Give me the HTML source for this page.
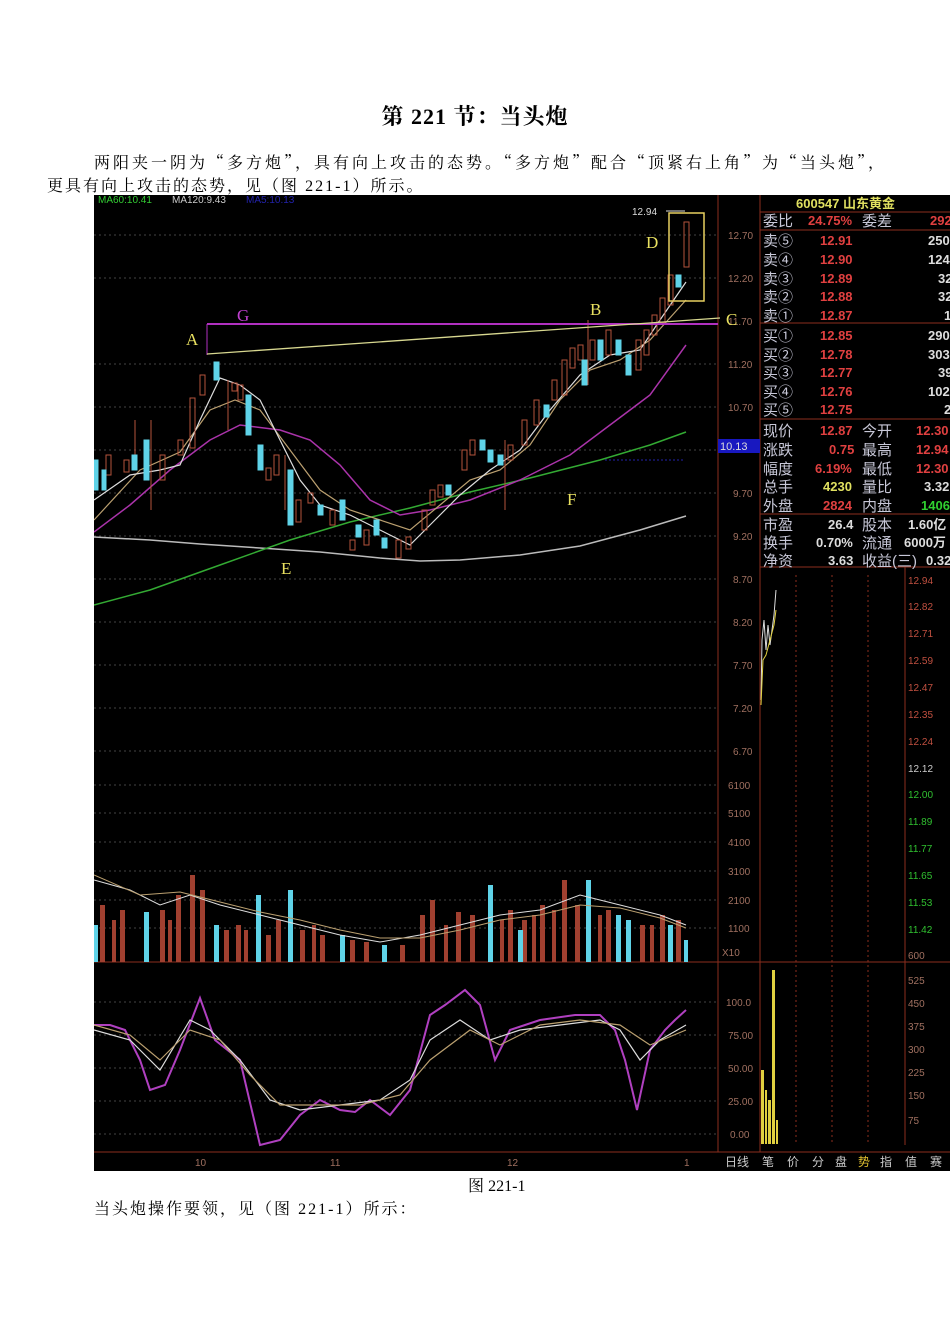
<!DOCTYPE html>
<html><head><meta charset="utf-8"><style>
body{margin:0;background:#fff;width:950px;height:1344px;position:relative;font-family:"Noto Serif CJK SC","Liberation Serif",serif;overflow:hidden}
.t{position:absolute;font-size:16px;color:#000;white-space:nowrap;line-height:20px}
.n{font-family:"Liberation Serif",serif}
svg text{font-family:"Liberation Sans","Noto Sans CJK SC",sans-serif}
svg .s{font-family:"Liberation Serif",serif}
</style></head><body>
<div class="t" style="left:0;width:950px;text-align:center;top:104px;font-size:22px;font-weight:bold;letter-spacing:1px;line-height:24px">第 <span class="n">221</span> 节：当头炮</div>
<div class="t" style="left:94px;top:152px;letter-spacing:3px">两阳夹一阴为“多方炮”，具有向上攻击的态势。“多方炮”配合“顶紧右上角”为“当头炮”，</div>
<div class="t" style="left:47px;top:175px;letter-spacing:2px">更具有向上攻击的态势，见（图 <span class="n">221-1</span>）所示。</div>
<div class="t" style="left:468px;top:1175px"><span>图</span> <span class="n">221-1</span></div>
<div class="t" style="left:94px;top:1198px;letter-spacing:2px">当头炮操作要领，见（图 <span class="n">221-1</span>）所示：</div>
<svg style="position:absolute;left:94px;top:195px" width="856" height="976" viewBox="94 195 856 976">
<rect x="94" y="195" width="856" height="976" fill="#000"/>
<text x="98" y="203" font-size="10" fill="#3c3">MA60:10.41</text><text x="172" y="203" font-size="10" fill="#ccc">MA120:9.43</text><text x="246" y="203" font-size="10" fill="#22a">MA5:10.13</text>
<g stroke="#444" stroke-dasharray="2,3" stroke-width="1">
<line x1="94" y1="235" x2="718" y2="235"/><line x1="94" y1="278" x2="718" y2="278"/><line x1="94" y1="364" x2="718" y2="364"/><line x1="94" y1="407" x2="718" y2="407"/><line x1="94" y1="450" x2="718" y2="450"/><line x1="94" y1="493" x2="718" y2="493"/><line x1="94" y1="536" x2="718" y2="536"/><line x1="94" y1="579" x2="718" y2="579"/><line x1="94" y1="622" x2="718" y2="622"/><line x1="94" y1="665" x2="718" y2="665"/><line x1="94" y1="708" x2="718" y2="708"/><line x1="94" y1="751" x2="718" y2="751"/><line x1="94" y1="785" x2="718" y2="785"/><line x1="94" y1="813" x2="718" y2="813"/><line x1="94" y1="842" x2="718" y2="842"/><line x1="94" y1="871" x2="718" y2="871"/><line x1="94" y1="900" x2="718" y2="900"/><line x1="94" y1="928" x2="718" y2="928"/><line x1="94" y1="1002" x2="718" y2="1002"/><line x1="94" y1="1035" x2="718" y2="1035"/><line x1="94" y1="1068" x2="718" y2="1068"/><line x1="94" y1="1101" x2="718" y2="1101"/><line x1="94" y1="1134" x2="718" y2="1134"/>
</g>
<g stroke="#8b2e1e" fill="none"><line x1="718" y1="195" x2="718" y2="1152"/><line x1="760" y1="195" x2="760" y2="1152"/><line x1="94" y1="962" x2="950" y2="962"/><line x1="94" y1="1152" x2="950" y2="1152"/><line x1="760" y1="212" x2="950" y2="212"/><line x1="760" y1="230" x2="950" y2="230"/><line x1="760" y1="323" x2="950" y2="323"/><line x1="760" y1="419" x2="950" y2="419"/><line x1="760" y1="514" x2="950" y2="514"/><line x1="760" y1="567" x2="950" y2="567"/><line x1="905" y1="567" x2="905" y2="1145"/><line x1="760" y1="962" x2="905" y2="962"/></g>
<g font-size="10" fill="#a07060">
<text x="728" y="239">12.70</text><text x="728" y="282">12.20</text><text x="728" y="325">11.70</text><text x="728" y="368">11.20</text><text x="728" y="411">10.70</text><text x="733" y="497">9.70</text><text x="733" y="540">9.20</text><text x="733" y="583">8.70</text><text x="733" y="626">8.20</text><text x="733" y="669">7.70</text><text x="733" y="712">7.20</text><text x="733" y="755">6.70</text>
<text x="728" y="789">6100</text><text x="728" y="817">5100</text><text x="728" y="846">4100</text><text x="728" y="875">3100</text><text x="728" y="904">2100</text><text x="728" y="932">1100</text><text x="722" y="956">X10</text>
<text x="726" y="1006">100.0</text><text x="728" y="1039">75.00</text><text x="728" y="1072">50.00</text><text x="728" y="1105">25.00</text><text x="730" y="1138">0.00</text>
</g>
<rect x="718" y="439" width="42" height="14" fill="#1818c0"/><text x="720" y="450" font-size="11" fill="#ddd">10.13</text>
<line x1="605" y1="460" x2="685" y2="460" stroke="#22a" stroke-dasharray="2,2"/>
<polyline fill="none" stroke="#bbb" stroke-width="1.5" points="94,537 150,540 200,544 260,548 320,552 380,558 420,561 460,560 520,555 580,546 640,530 686,516"/>
<polyline fill="none" stroke="#3a3" stroke-width="1.5" points="94,605 150,590 220,565 290,540 350,522 410,508 470,492 530,478 600,460 650,445 686,432"/>
<polyline fill="none" stroke="#a3a" stroke-width="1.5" points="94,532 130,505 170,470 210,440 240,425 280,430 310,440 340,465 370,500 400,515 430,510 470,500 520,480 570,455 610,425 650,395 686,345"/>
<polyline fill="none" stroke="#bba070" stroke-width="1.2" points="94,520 140,470 180,452 210,410 235,400 260,410 290,450 320,490 350,510 380,520 410,530 440,505 470,480 500,470 530,445 560,400 590,370 620,360 650,340 686,300"/>
<polyline fill="none" stroke="#ddd" stroke-width="1.2" points="94,500 130,475 160,470 180,465 200,420 220,378 240,385 260,400 280,440 300,480 320,505 350,515 380,530 410,545 430,525 460,495 490,470 520,450 550,410 580,375 610,355 640,350 660,320 686,282"/>
<g stroke-width="1">
<g stroke="#b5533c" fill="none">
<rect x="106" y="455" width="5" height="20"/><rect x="124" y="460" width="5" height="12"/><rect x="160" y="455" width="5" height="25"/><rect x="178" y="440" width="5" height="15"/><rect x="190" y="398" width="5" height="50"/><rect x="200" y="375" width="5" height="20"/><rect x="232" y="383" width="5" height="8"/><rect x="238" y="385" width="5" height="15"/><rect x="266" y="468" width="5" height="12"/><rect x="274" y="455" width="5" height="20"/><rect x="296" y="500" width="5" height="22"/><rect x="308" y="493" width="5" height="10"/><rect x="330" y="510" width="5" height="15"/><rect x="350" y="540" width="5" height="10"/><rect x="364" y="530" width="5" height="15"/><rect x="396" y="540" width="5" height="18"/><rect x="406" y="537" width="5" height="12"/><rect x="422" y="510" width="5" height="20"/><rect x="430" y="490" width="5" height="15"/><rect x="438" y="485" width="5" height="12"/><rect x="462" y="450" width="5" height="20"/><rect x="470" y="440" width="5" height="15"/><rect x="508" y="445" width="5" height="15"/><rect x="522" y="420" width="5" height="25"/><rect x="534" y="400" width="5" height="25"/><rect x="552" y="380" width="5" height="20"/><rect x="562" y="360" width="5" height="35"/><rect x="570" y="348" width="5" height="20"/><rect x="578" y="345" width="5" height="15"/><rect x="590" y="340" width="5" height="20"/><rect x="606" y="330" width="5" height="25"/><rect x="636" y="340" width="5" height="30"/><rect x="644" y="330" width="5" height="25"/><rect x="652" y="315" width="5" height="20"/><rect x="660" y="298" width="5" height="25"/><rect x="668" y="275" width="5" height="30"/><rect x="684" y="222" width="5" height="45"/>
<line x1="151" y1="420" x2="151" y2="510"/><line x1="135" y1="420" x2="135" y2="470"/><line x1="228" y1="380" x2="228" y2="430"/><line x1="285" y1="455" x2="285" y2="510"/><line x1="505" y1="440" x2="505" y2="510"/><line x1="588" y1="320" x2="588" y2="385"/>
</g>
<g fill="#5fd3e8" stroke="#5fd3e8">
<rect x="94" y="460" width="4" height="30"/><rect x="102" y="470" width="4" height="20"/><rect x="132" y="455" width="5" height="15"/><rect x="144" y="440" width="5" height="40"/><rect x="214" y="362" width="5" height="18"/><rect x="246" y="395" width="5" height="40"/><rect x="258" y="445" width="5" height="25"/><rect x="288" y="470" width="5" height="55"/><rect x="318" y="505" width="5" height="10"/><rect x="340" y="500" width="5" height="20"/><rect x="356" y="525" width="5" height="12"/><rect x="374" y="520" width="5" height="15"/><rect x="382" y="538" width="5" height="10"/><rect x="446" y="485" width="5" height="10"/><rect x="480" y="440" width="5" height="10"/><rect x="488" y="450" width="5" height="12"/><rect x="498" y="455" width="5" height="10"/><rect x="544" y="405" width="5" height="12"/><rect x="582" y="360" width="5" height="25"/><rect x="598" y="340" width="5" height="20"/><rect x="616" y="340" width="5" height="15"/><rect x="626" y="355" width="5" height="20"/><rect x="676" y="275" width="5" height="12"/>
</g></g>
<line x1="207" y1="324" x2="718" y2="324" stroke="#b030c0" stroke-width="2"/>
<line x1="207" y1="324" x2="207" y2="355" stroke="#b030c0"/>
<line x1="207" y1="354" x2="720" y2="318" stroke="#d8d890" stroke-width="1.3"/>
<rect x="669" y="213" width="35" height="88" fill="none" stroke="#e8d060" stroke-width="1.5"/>
<g fill="#e8e060" font-size="17">
<text class="s" x="186" y="345">A</text><text class="s" x="590" y="315">B</text><text class="s" x="726" y="325">C</text><text class="s" x="646" y="248">D</text><text class="s" x="281" y="574">E</text><text class="s" x="567" y="505">F</text><text class="s" x="237" y="321" fill="#c040d0">G</text></g>
<text x="632" y="215" font-size="10" fill="#ddd">12.94</text><line x1="666" y1="211" x2="685" y2="211" stroke="#ddd"/>
<g fill="#a04030">
<rect x="100" y="905" width="5" height="57"/><rect x="120" y="910" width="5" height="52"/><rect x="160" y="910" width="5" height="52"/><rect x="176" y="895" width="5" height="67"/><rect x="190" y="875" width="5" height="87"/><rect x="200" y="890" width="5" height="72"/><rect x="224" y="930" width="5" height="32"/><rect x="236" y="925" width="5" height="37"/><rect x="266" y="935" width="5" height="27"/><rect x="276" y="920" width="5" height="42"/><rect x="300" y="930" width="5" height="32"/><rect x="320" y="935" width="5" height="27"/><rect x="350" y="940" width="5" height="22"/><rect x="364" y="942" width="5" height="20"/><rect x="400" y="945" width="5" height="17"/><rect x="420" y="915" width="5" height="47"/><rect x="430" y="900" width="5" height="62"/><rect x="456" y="912" width="5" height="50"/><rect x="470" y="915" width="5" height="47"/><rect x="508" y="910" width="5" height="52"/><rect x="522" y="920" width="5" height="42"/><rect x="540" y="905" width="5" height="57"/><rect x="562" y="880" width="5" height="82"/><rect x="575" y="905" width="5" height="57"/><rect x="606" y="910" width="5" height="52"/><rect x="640" y="925" width="5" height="37"/><rect x="660" y="915" width="5" height="47"/><rect x="676" y="920" width="5" height="42"/>
<rect x="112" y="920" width="4" height="42"/><rect x="168" y="920" width="4" height="42"/><rect x="244" y="930" width="4" height="32"/><rect x="312" y="925" width="4" height="37"/><rect x="444" y="925" width="4" height="37"/><rect x="500" y="920" width="4" height="42"/><rect x="532" y="915" width="4" height="47"/><rect x="552" y="910" width="4" height="52"/><rect x="598" y="915" width="4" height="47"/><rect x="650" y="925" width="4" height="37"/>
</g>
<g fill="#5fd3e8">
<rect x="94" y="925" width="4" height="37"/><rect x="144" y="912" width="5" height="50"/><rect x="214" y="925" width="5" height="37"/><rect x="256" y="895" width="5" height="67"/><rect x="288" y="890" width="5" height="72"/><rect x="340" y="935" width="5" height="27"/><rect x="382" y="945" width="5" height="17"/><rect x="488" y="885" width="5" height="77"/><rect x="518" y="930" width="5" height="32"/><rect x="586" y="880" width="5" height="82"/><rect x="616" y="915" width="5" height="47"/><rect x="626" y="920" width="5" height="42"/><rect x="668" y="925" width="5" height="37"/><rect x="684" y="940" width="4" height="22"/>
</g>
<polyline fill="none" stroke="#ddd" points="94,880 130,890 160,905 190,895 220,905 260,915 300,925 340,935 380,942 420,935 460,925 500,915 540,910 580,895 620,905 660,915 686,925"/>
<polyline fill="none" stroke="#bba070" points="94,875 140,895 180,892 220,902 260,912 300,920 340,930 380,938 420,938 460,930 500,920 540,915 580,905 620,908 660,918 686,928"/>
<polyline fill="none" stroke="#b040c0" stroke-width="2" points="94,1025 110,1025 125,1030 140,1060 150,1090 165,1085 180,1050 200,998 215,1040 240,1060 260,1145 280,1140 300,1115 320,1100 340,1110 355,1112 370,1100 390,1115 410,1090 430,1015 445,1005 465,990 480,1005 495,1060 510,1030 540,1020 575,1015 600,1015 615,1030 625,1060 637,1110 650,1050 665,1030 675,1020 686,1010"/>
<polyline fill="none" stroke="#ddd" stroke-width="1.2" points="94,1030 130,1040 160,1070 190,1020 210,1030 240,1060 270,1100 300,1110 340,1105 380,1100 410,1080 430,1040 460,1020 490,1040 520,1030 560,1025 600,1020 620,1030 640,1060 660,1040 686,1025"/>
<polyline fill="none" stroke="#bba070" stroke-width="1.2" points="94,1025 130,1035 160,1060 190,1030 220,1040 250,1075 280,1105 320,1105 360,1105 400,1095 430,1060 470,1030 500,1045 540,1025 580,1020 620,1025 650,1045 686,1030"/>
<g font-size="10" fill="#a07060"><text x="195" y="1166">10</text><text x="330" y="1166">11</text><text x="507" y="1166">12</text><text x="684" y="1166">1</text></g>
<g font-size="12" fill="#ccc"><text x="725" y="1166">日线</text><text x="762" y="1166">笔</text><text x="787" y="1166">价</text><text x="812" y="1166">分</text><text x="835" y="1166">盘</text><text x="858" y="1166" fill="#e0c030">势</text><text x="880" y="1166">指</text><text x="905" y="1166">值</text><text x="930" y="1166">赛</text></g>
<text x="796" y="208" font-size="13" font-weight="bold" fill="#e0e060">600547 山东黄金</text>
<g font-size="15" fill="#c8c8d8">
<text x="763" y="226">委比</text><text x="862" y="226">委差</text>
<text x="763" y="246">卖⑤</text><text x="763" y="265">卖④</text><text x="763" y="284">卖③</text><text x="763" y="302">卖②</text><text x="763" y="321">卖①</text>
<text x="763" y="341">买①</text><text x="763" y="360">买②</text><text x="763" y="378">买③</text><text x="763" y="397">买④</text><text x="763" y="415">买⑤</text>
<text x="763" y="436">现价</text><text x="763" y="455">涨跌</text><text x="763" y="474">幅度</text><text x="763" y="492">总手</text><text x="763" y="511">外盘</text>
<text x="862" y="436">今开</text><text x="862" y="455">最高</text><text x="862" y="474">最低</text><text x="862" y="492">量比</text><text x="862" y="511">内盘</text>
<text x="763" y="530">市盈</text><text x="763" y="548">换手</text><text x="763" y="566">净资</text><text x="862" y="530">股本</text><text x="862" y="548">流通</text><text x="862" y="566">收益(三)</text>
</g>
<g font-size="13" font-weight="bold" fill="#e04040">
<text x="808" y="225">24.75%</text><text x="930" y="225">292</text>
<text x="820" y="245">12.91</text><text x="820" y="264">12.90</text><text x="820" y="283">12.89</text><text x="820" y="301">12.88</text><text x="820" y="320">12.87</text>
<text x="820" y="340">12.85</text><text x="820" y="359">12.78</text><text x="820" y="377">12.77</text><text x="820" y="396">12.76</text><text x="820" y="414">12.75</text>
<text x="820" y="435">12.87</text><text x="829" y="454">0.75</text><text x="815" y="473">6.19%</text><text x="823" y="510">2824</text>
<text x="916" y="435">12.30</text><text x="916" y="454">12.94</text><text x="916" y="473">12.30</text>
<text x="823" y="491" fill="#e0e060">4230</text><text x="921" y="510" fill="#30d030">1406</text>
</g>
<g font-size="13" font-weight="bold" fill="#ddd">
<text x="928" y="245">250</text><text x="928" y="264">124</text><text x="938" y="283">32</text><text x="938" y="301">32</text><text x="944" y="320">1</text>
<text x="928" y="340">290</text><text x="928" y="359">303</text><text x="938" y="377">39</text><text x="928" y="396">102</text><text x="944" y="414">2</text>
<text x="924" y="491">3.32</text><text x="828" y="529">26.4</text><text x="816" y="547">0.70%</text><text x="828" y="565">3.63</text><text x="908" y="529">1.60亿</text><text x="904" y="547">6000万</text><text x="926" y="565">0.32</text>
</g>
<g stroke="#8b2e1e" stroke-dasharray="2,3"><line x1="796" y1="575" x2="796" y2="1145"/><line x1="832" y1="575" x2="832" y2="1145"/><line x1="868" y1="575" x2="868" y2="1145"/></g>
<g font-size="10" fill="#c05040"><text x="908" y="584">12.94</text><text x="908" y="610">12.82</text><text x="908" y="637">12.71</text><text x="908" y="664">12.59</text><text x="908" y="691">12.47</text><text x="908" y="718">12.35</text><text x="908" y="745">12.24</text></g>
<text x="908" y="772" font-size="10" fill="#ccc">12.12</text>
<g font-size="10" fill="#30c030"><text x="908" y="798">12.00</text><text x="908" y="825">11.89</text><text x="908" y="852">11.77</text><text x="908" y="879">11.65</text><text x="908" y="906">11.53</text><text x="908" y="933">11.42</text></g>
<g font-size="10" fill="#a07060"><text x="908" y="959">600</text><text x="908" y="984">525</text><text x="908" y="1007">450</text><text x="908" y="1030">375</text><text x="908" y="1053">300</text><text x="908" y="1076">225</text><text x="908" y="1099">150</text><text x="908" y="1124">75</text></g>
<polyline fill="none" stroke="#ddd" points="761,700 762,640 764,620 766,650 768,625 770,645 772,630 774,615 776,590"/>
<polyline fill="none" stroke="#e0d040" points="761,705 763,660 766,655 770,640 774,625 776,610"/>
<g fill="#e0d040"><rect x="761" y="1070" width="3" height="74"/><rect x="765" y="1090" width="2" height="54"/><rect x="768" y="1100" width="3" height="44"/><rect x="772" y="970" width="3" height="174"/><rect x="776" y="1120" width="2" height="24"/></g>
</svg>
</body></html>
